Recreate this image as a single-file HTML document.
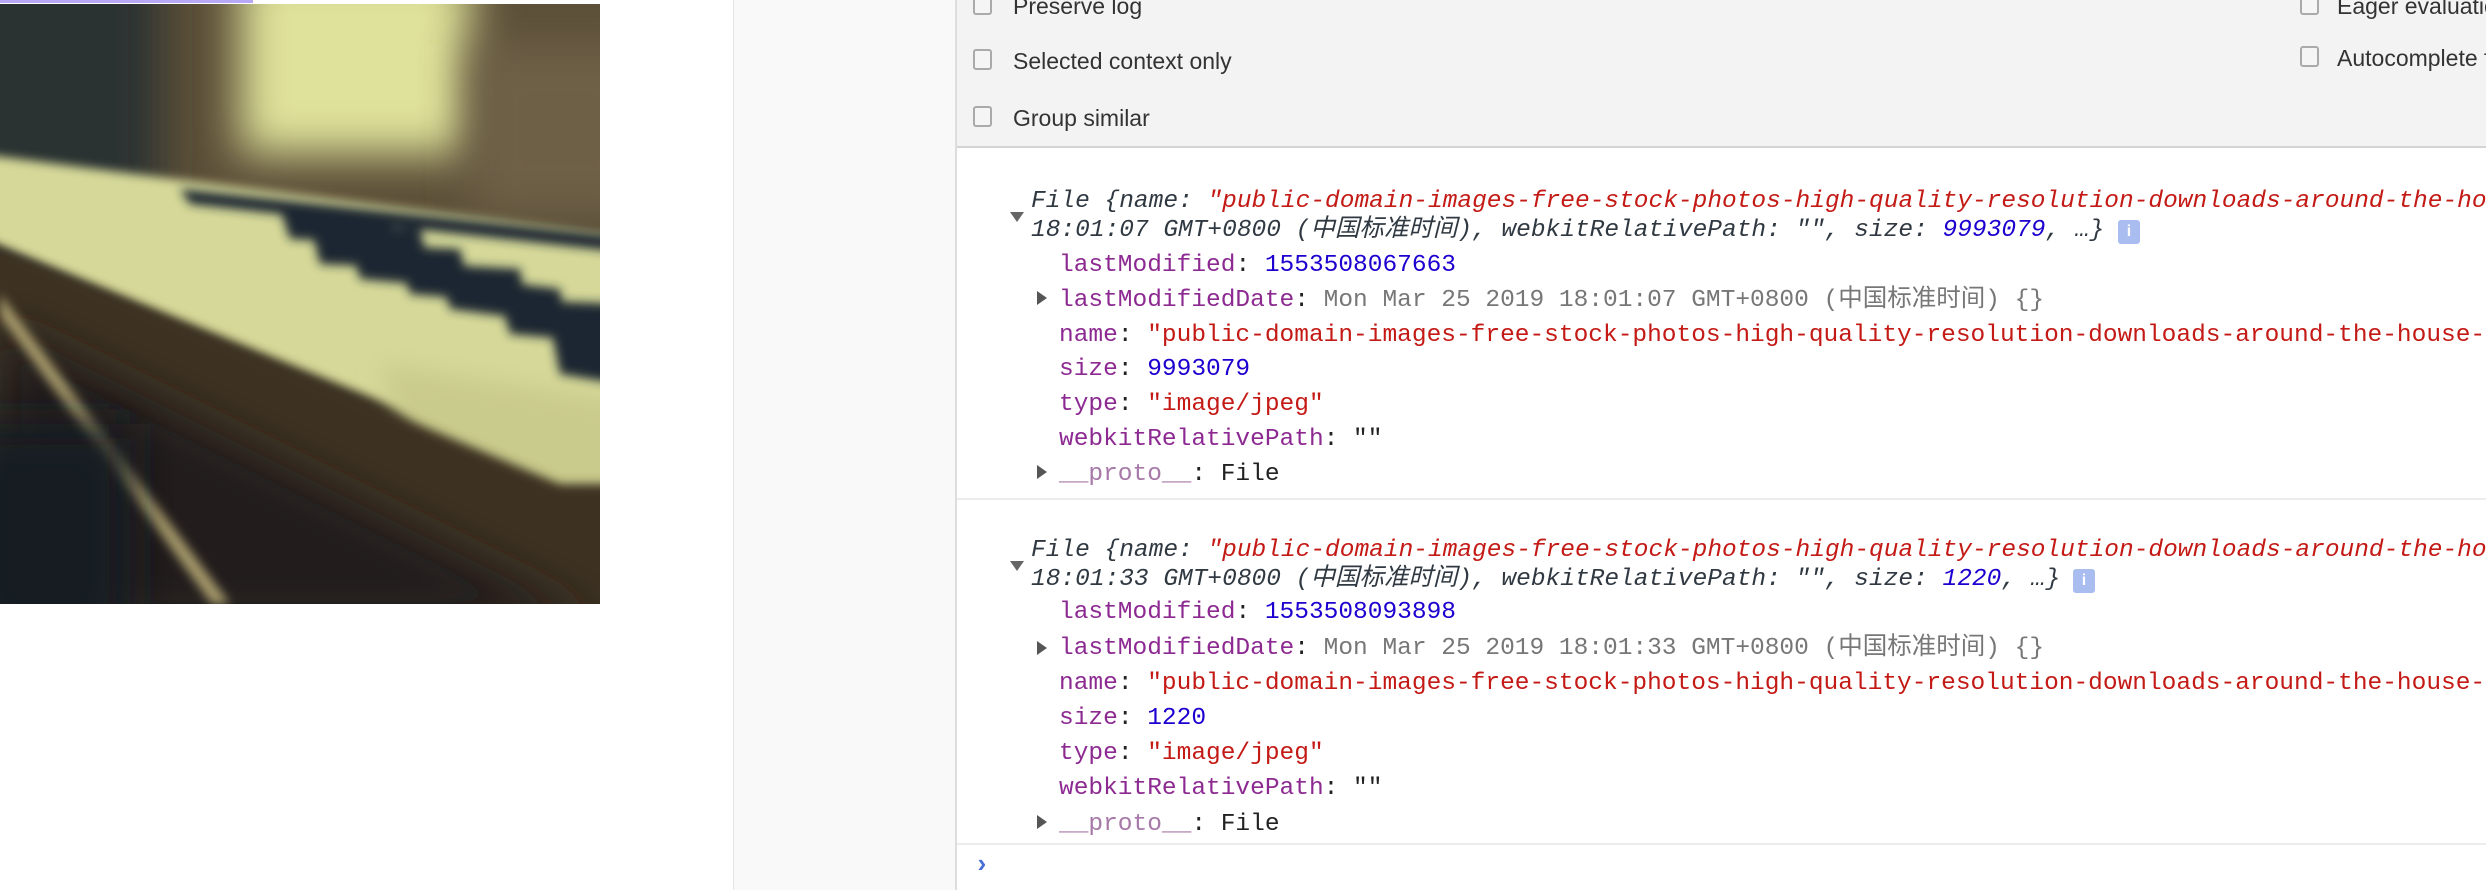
<!DOCTYPE html>
<html><head><meta charset="utf-8"><style>
html,body{margin:0;padding:0}
body{width:2486px;height:890px;position:relative;overflow:hidden;background:#fff;font-family:"Liberation Sans","Noto Sans CJK SC",sans-serif}
#wrap{position:absolute;left:0;top:0;width:2486px;height:890px;overflow:hidden}
.a{position:absolute}
.m{position:absolute;font-family:"Liberation Mono","Noto Sans CJK SC",monospace;font-size:24.5px;line-height:35px;white-space:pre;color:#222}
.k{color:#8d2a92}
.n{color:#1c00cf}
.s{color:#c41a16}
.g{color:#777}
.i{font-style:italic;color:#303942}
.cb{position:absolute;width:15px;height:17px;border:2px solid #aaa;border-radius:3px;background:#f5f5f5}
.lab{position:absolute;font-size:23px;color:#333;line-height:30px;white-space:pre}
.tri{position:absolute;width:0;height:0}
.tr{border-top:7px solid transparent;border-bottom:7px solid transparent;border-left:10px solid #555}
.td{border-left:7px solid transparent;border-right:7px solid transparent;border-top:10px solid #666}
.info{position:absolute;width:22px;height:24px;background:#a9bdf0;border-radius:3px;color:#fff;font-size:16px;text-align:center;line-height:24px;font-weight:bold}
</style></head><body><div id="wrap">
<div class="a" style="left:0;top:0;width:253px;height:3px;background:#b9a8f5"></div>
<svg class="a" style="left:0;top:4px" width="600" height="600" viewBox="0 0 600 600">
<defs>
<filter id="b1" x="-100%" y="-100%" width="300%" height="300%"><feGaussianBlur stdDeviation="22"/></filter>
<filter id="b2" x="-50%" y="-50%" width="200%" height="200%"><feGaussianBlur stdDeviation="5"/></filter>
<filter id="b3" x="-50%" y="-50%" width="200%" height="200%"><feGaussianBlur stdDeviation="12"/></filter>
<clipPath id="c"><rect width="600" height="600"/></clipPath>
</defs>
<g clip-path="url(#c)">
<rect width="600" height="600" fill="#3d3526"/>
<rect x="-50" y="-50" width="700" height="300" fill="#5b5037" filter="url(#b1)"/>
<rect x="-60" y="-60" width="220" height="330" fill="#2a3030" filter="url(#b1)"/>
<rect x="240" y="-40" width="230" height="190" fill="#dfe29a" filter="url(#b1)"/>
<rect x="470" y="40" width="180" height="170" fill="#6e6146" filter="url(#b1)"/>
<polygon points="-20,150 640,235 640,470 560,470 -20,235" fill="#d5d898" filter="url(#b2)"/>
<polygon points="380,360 640,400 640,520 420,480" fill="#c9cb8c" filter="url(#b3)"/>
<g fill="#1f2630" filter="url(#b2)">
<polygon points="180,185 640,235 640,250 190,200"/>
<polygon points="280,205 390,210 395,240 290,235"/>
<polygon points="310,220 420,225 430,265 320,260"/>
<polygon points="350,240 460,245 470,285 360,275"/>
<polygon points="400,258 520,265 525,300 410,290"/>
<polygon points="440,270 560,285 565,320 450,305"/>
<polygon points="500,295 620,300 620,340 510,330"/>
<polygon points="550,320 620,320 620,380 560,370"/>
</g>
<polygon points="-20,235 560,480 640,480 640,640 -20,640" fill="#3c3322" filter="url(#b2)"/>
<polygon points="0,320 600,620 0,620" fill="#231f1a" filter="url(#b1)"/>
<polygon points="0,290 230,600 212,600 0,312" fill="#a69a6a" filter="url(#b2)"/>
<rect x="-40" y="420" width="170" height="220" fill="#131c22" filter="url(#b1)"/>
</g>
</svg>
<div class="a" style="left:733px;top:0;width:222px;height:890px;background:#f9f9f9;border-left:1px solid #e4e4e4"></div>
<div class="a" style="left:955px;top:0;width:1531px;height:890px;background:#fff;border-left:2px solid #ddd"></div>
<div class="a" style="left:957px;top:0;width:1529px;height:146px;background:#f3f3f3;border-bottom:2px solid #d4d4d4"></div>
<div class="cb" style="left:973px;top:-6px"></div><div class="lab" style="left:1013px;top:-9px">Preserve log</div>
<div class="cb" style="left:973px;top:49px"></div><div class="lab" style="left:1013px;top:46px">Selected context only</div>
<div class="cb" style="left:973px;top:106px"></div><div class="lab" style="left:1013px;top:103px">Group similar</div>
<div class="cb" style="left:2300px;top:-6px"></div><div class="lab" style="left:2337px;top:-9px">Eager evaluation</div>
<div class="cb" style="left:2300px;top:46px"></div><div class="lab" style="left:2337px;top:43px">Autocomplete from history</div>

<div class="tri td" style="left:1010px;top:212px"></div>
<div class="m i" style="left:1031px;top:184px">File {name: <span class="s">"public-domain-images-free-stock-photos-high-quality-resolution-downloads-around-the-house</span></div>
<div class="m i" style="left:1031px;top:213px">18:01:07 GMT+0800 (中国标准时间), webkitRelativePath: "", size: <span class="n">9993079</span>, …}</div>
<div class="info" style="left:2118px;top:220px">i</div>
<div class="m" style="left:1059px;top:248px"><span class="k">lastModified</span>: <span class="n">1553508067663</span></div>
<div class="tri tr" style="left:1037px;top:291px"></div>
<div class="m" style="left:1059px;top:283px"><span class="k">lastModifiedDate</span>: <span class="g">Mon Mar 25 2019 18:01:07 GMT+0800 (中国标准时间) {}</span></div>
<div class="m" style="left:1059px;top:318px"><span class="k">name</span>: <span class="s">"public-domain-images-free-stock-photos-high-quality-resolution-downloads-around-the-house-1</span></div>
<div class="m" style="left:1059px;top:352px"><span class="k">size</span>: <span class="n">9993079</span></div>
<div class="m" style="left:1059px;top:387px"><span class="k">type</span>: <span class="s">"image/jpeg"</span></div>
<div class="m" style="left:1059px;top:422px"><span class="k">webkitRelativePath</span>: ""</div>
<div class="tri tr" style="left:1037px;top:465px"></div>
<div class="m" style="left:1059px;top:457px"><span class="k" style="color:#a779a8">__proto__</span>: File</div>
<div class="a" style="left:957px;top:498px;width:1529px;height:2px;background:#ececec"></div>

<div class="tri td" style="left:1010px;top:561px"></div>
<div class="m i" style="left:1031px;top:533px">File {name: <span class="s">"public-domain-images-free-stock-photos-high-quality-resolution-downloads-around-the-house</span></div>
<div class="m i" style="left:1031px;top:562px">18:01:33 GMT+0800 (中国标准时间), webkitRelativePath: "", size: <span class="n">1220</span>, …}</div>
<div class="info" style="left:2073px;top:569px">i</div>
<div class="m" style="left:1059px;top:595px"><span class="k">lastModified</span>: <span class="n">1553508093898</span></div>
<div class="tri tr" style="left:1037px;top:641px"></div>
<div class="m" style="left:1059px;top:631px"><span class="k">lastModifiedDate</span>: <span class="g">Mon Mar 25 2019 18:01:33 GMT+0800 (中国标准时间) {}</span></div>
<div class="m" style="left:1059px;top:666px"><span class="k">name</span>: <span class="s">"public-domain-images-free-stock-photos-high-quality-resolution-downloads-around-the-house-1</span></div>
<div class="m" style="left:1059px;top:701px"><span class="k">size</span>: <span class="n">1220</span></div>
<div class="m" style="left:1059px;top:736px"><span class="k">type</span>: <span class="s">"image/jpeg"</span></div>
<div class="m" style="left:1059px;top:771px"><span class="k">webkitRelativePath</span>: ""</div>
<div class="tri tr" style="left:1037px;top:815px"></div>
<div class="m" style="left:1059px;top:807px"><span class="k" style="color:#a779a8">__proto__</span>: File</div>
<div class="a" style="left:957px;top:843px;width:1529px;height:2px;background:#ececec"></div>
<div class="a" style="left:974px;top:850px;font-size:26px;color:#4a6fd8;font-weight:bold;font-family:'Liberation Mono',monospace">›</div>
</div></body></html>
